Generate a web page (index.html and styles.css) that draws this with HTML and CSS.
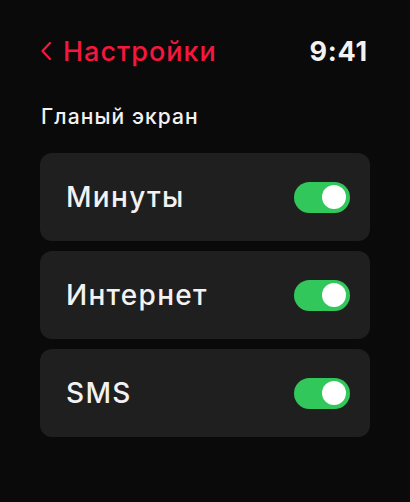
FILE: index.html
```html
<!DOCTYPE html>
<html>
	<head>
		<meta charset="UTF-8" />
		<meta name="viewport" content="width=device-width, initial-scale=1.0" />
		<title>Настройки</title>
		<link rel="stylesheet" href="styles.css">
	</head>

	<body>
		<div id="screen">
			<div class="topbar">
				<div class="back">
					<svg class="chevron" width="12" height="20" viewBox="0 0 12 20">
						<path d="M10 2 L2.5 10 L10 18" fill="none" stroke="#f5173d" stroke-width="2.2" stroke-linecap="round" stroke-linejoin="round"/>
					</svg>
					<span>Настройки</span>
				</div>
				<div class="clock">9:41</div>
			</div>

			<p class="section">Гланый экран</p>

			<div class="list">
				<div class="row">
					<span class="label">Минуты</span>
					<span class="toggle on"><span class="knob"></span></span>
				</div>
				<div class="row">
					<span class="label">Интернет</span>
					<span class="toggle on"><span class="knob"></span></span>
				</div>
				<div class="row">
					<span class="label">SMS</span>
					<span class="toggle on"><span class="knob"></span></span>
				</div>
			</div>
		</div>
	</body>
</html>
```

FILE: styles.css
```css
    html, body {
	    width:100%; height:100%;
	    margin:0px; padding:0px;
	    background:#0a0a0a; color:#f2f2f2;
    }

    body {
	    font-family: Inter, "Noto Sans", sans-serif;
    }

    #screen { padding:34px 40px 0px 40px }

    .topbar {
	    display:flex;
	    justify-content:space-between;
	    align-items:center;
	    height:34px;
    }

    .back {
	    display:flex;
	    align-items:center;
	    gap:11px;
	    color:#f5173d;
	    font-size:27px;
	    font-weight:500;
	    letter-spacing:1px;
    }
    .chevron { display:block }

    .clock {
	    font-size:27px;
	    font-weight:700;
	    letter-spacing:0.8px;
	    margin-right:2px;
    }

    .section {
	    margin:37px 0px 24px 1px;
	    font-size:21px;
	    font-weight:500;
	    letter-spacing:1.1px;
	    line-height:24px;
    }

    .list {
	    display:flex;
	    flex-direction:column;
	    gap:10px;
    }

    .row {
	    display:flex;
	    justify-content:space-between;
	    align-items:center;
	    height:88px;
	    padding:0px 20px 0px 26px;
	    background:#1f1f1f;
	    border-radius:12px;
    }

    .label {
	    font-size:28px;
	    font-weight:500;
	    letter-spacing:1.3px;
    }

    .toggle {
	    display:flex;
	    align-items:center;
	    justify-content:flex-end;
	    width:56px; height:31px;
	    padding:0px 4px;
	    box-sizing:border-box;
	    border-radius:16px;
	    background:#31c75a;
    }
    .knob {
	    width:24px; height:24px;
	    border-radius:50%;
	    background:#ffffff;
    }
```
